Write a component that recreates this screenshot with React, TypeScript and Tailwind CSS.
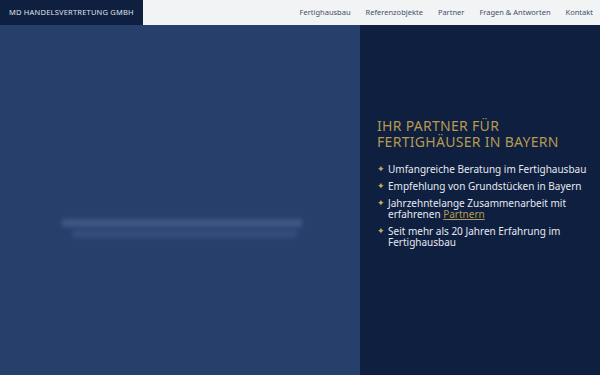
export default function App() {
  const items = [
    { text: "Umfangreiche Beratung im Fertighausbau" },
    { text: "Empfehlung von Grundstücken in Bayern" },
    { text: "Jahrzehntelange Zusammenarbeit mit erfahrenen ", link: "Partnern" },
    { text: "Seit mehr als 20 Jahren Erfahrung im Fertighausbau" },
  ];

  return (
    <div
      className="w-[600px] h-[375px] flex flex-col overflow-hidden"
      style={{ fontFamily: "'Noto Sans', 'DejaVu Sans', sans-serif" }}
    >
      {/* Header */}
      <header className="h-[25px] flex bg-[#f2f3f5]">
        <div className="w-[143px] bg-[#0f1f40] flex items-center pl-[9px]">
          <span className="text-[7.5px] tracking-[0.2px] text-[#dfe3ea] whitespace-nowrap">
            MD HANDELSVERTRETUNG GMBH
          </span>
        </div>
        <nav className="flex-1 flex items-center justify-end gap-[15px] pr-[7px] text-[7.5px] text-[#44506b] whitespace-nowrap">
          <span>Fertighausbau</span>
          <span>Referenzobjekte</span>
          <span>Partner</span>
          <span>Fragen &amp; Antworten</span>
          <span>Kontakt</span>
        </nav>
      </header>

      {/* Hero */}
      <main className="flex-1 flex">
        <section className="w-[360px] bg-[#273f6b] pt-[192px] pl-[58px]">
          {/* blurred slogan */}
          <div className="w-[248px] h-[25px] blur-[2px] flex flex-col gap-[3px] px-[4px] py-[2px] opacity-70">
            <div className="h-[8px] bg-[#4a6190]" />
            <div className="h-[8px] ml-[10px] w-[225px] bg-[#3d5383]" />
          </div>
        </section>
        <section className="flex-1 bg-[#0f1f40] pl-[17px] pr-[10px] pt-[93px]">
          <h1 className="text-[14px] leading-[16px] text-[#b59a4f] uppercase tracking-[0.3px]">
            <span className="block">Ihr Partner für</span>
            <span className="block">Fertighäuser in Bayern</span>
          </h1>
          <ul className="mt-[14px] flex flex-col gap-[6px] text-[10px] leading-[11px] text-[#e6e9ef]">
            {items.map((it, i) => (
              <li key={i} className="flex gap-[2px]">
                <span className="text-[#c9ab5c] text-[9px] w-[9px] shrink-0 leading-[10px]">✦</span>
                <p>
                  {it.text}
                  {it.link && <a className="text-[#b59a4f] underline">{it.link}</a>}
                </p>
              </li>
            ))}
          </ul>
        </section>
      </main>
    </div>
  );
}
